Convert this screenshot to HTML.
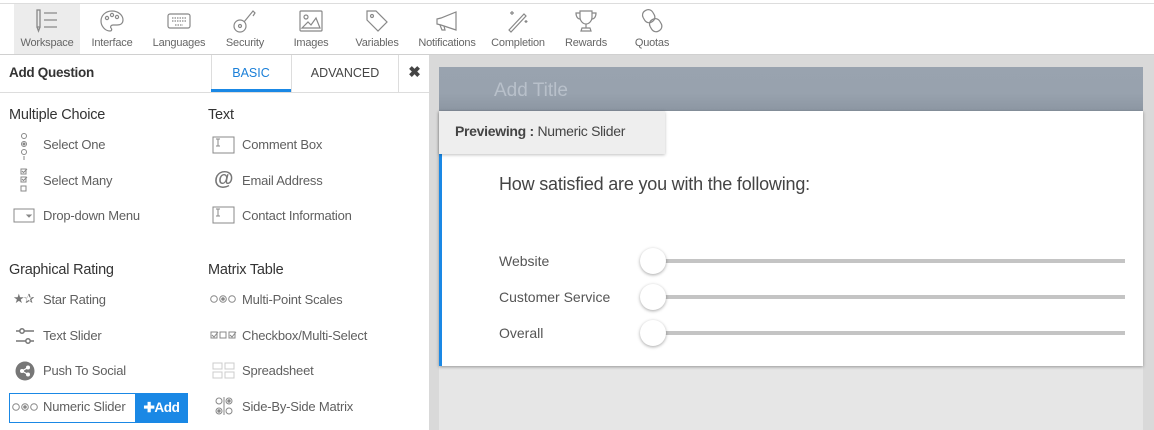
<!DOCTYPE html>
<html><head><meta charset="utf-8"><style>
*{margin:0;padding:0;box-sizing:border-box}
body{width:1154px;height:430px;overflow:hidden;background:#fff;font-family:"Liberation Sans",sans-serif;position:relative}
.abs{position:absolute}
.tb{position:absolute;top:4px;height:50px;text-align:center;font-size:11px;color:#666;letter-spacing:-0.2px}
.tb svg{position:absolute;left:50%;margin-left:-13px;top:4px}
.tb span{position:absolute;left:0;right:0;top:33px;white-space:nowrap}
.h{position:absolute;font-size:14.5px;color:#333;letter-spacing:-0.2px}
.it{position:absolute;font-size:13px;color:#5f5f5f;letter-spacing:-0.2px}
.ic{position:absolute}
.lbl{position:absolute;left:499px;font-size:14px;color:#555}
.track{position:absolute;left:660px;width:465px;height:4px;background:#c4c4c4}
.knob{position:absolute;left:640px;width:26px;height:26px;border-radius:50%;background:#fff;box-shadow:0 1px 3px rgba(0,0,0,.35)}
</style></head><body>
<div class="abs" style="left:0;top:3px;width:1154px;height:1px;background:#ddd"></div>
<div class="abs" style="left:0;top:54px;width:1154px;height:1px;background:#d0d0d0"></div>
<div class="abs" style="left:14px;top:4px;width:66px;height:50px;background:#ececec"></div>

<div class="tb" style="left:14px;width:66px"><svg width="26" height="26" viewBox="0 0 26 26" fill="none" stroke="#888" stroke-width="1.3"><rect x="3" y="2" width="3" height="17"/><path d="M3 19l1.5 4 1.5-4M10 5h13M10 12h13M10 19h13"/></svg><span>Workspace</span></div>
<div class="tb" style="left:85px;width:54px"><svg width="26" height="26" viewBox="0 0 26 26" fill="none" stroke="#888" stroke-width="1.2"><path d="M13 3C6 3 2 8 2 13s4 10 9 10c2 0 2-2 1-3s0-3 2-3h4c4 0 6-2 6-5 0-5-5-9-11-9z"/><circle cx="8" cy="10" r="1.6"/><circle cx="13" cy="7" r="1.6"/><circle cx="18" cy="9" r="1.6"/></svg><span>Interface</span></div>
<div class="tb" style="left:150px;width:58px"><svg width="26" height="26" viewBox="0 0 26 26" fill="none" stroke="#888" stroke-width="1.2"><rect x="2" y="6" width="22" height="14" rx="2"/><path d="M6 10h14M6 13h14M9 17h8" stroke-dasharray="1.5 1"/></svg><span>Languages</span></div>
<div class="tb" style="left:218px;width:54px"><svg width="26" height="26" viewBox="0 0 26 26" fill="none" stroke="#888" stroke-width="1.2"><circle cx="8" cy="18" r="6"/><circle cx="8" cy="18" r="1.5"/><path d="M12 14l9-11 2 2-2 3"/></svg><span>Security</span></div>
<div class="tb" style="left:285px;width:52px"><svg width="26" height="26" viewBox="0 0 26 26" fill="none" stroke="#888" stroke-width="1.2"><rect x="2" y="3" width="22" height="20" rx="1"/><circle cx="8" cy="9" r="2"/><path d="M4 20l6-6 3 3 5-7 4 10z"/></svg><span>Images</span></div>
<div class="tb" style="left:350px;width:54px"><svg width="26" height="26" viewBox="0 0 26 26" fill="none" stroke="#888" stroke-width="1.2"><path d="M3 3h9l11 11-9 9L3 12z"/><circle cx="8" cy="8" r="1.5"/></svg><span>Variables</span></div>
<div class="tb" style="left:414px;width:66px"><svg width="26" height="26" viewBox="0 0 26 26" fill="none" stroke="#888" stroke-width="1.2"><path d="M3 11v5l4 1 15 5V4L7 10z"/><path d="M6 17l2 5h3l-1-4"/></svg><span>Notifications</span></div>
<div class="tb" style="left:488px;width:60px"><svg width="26" height="26" viewBox="0 0 26 26" fill="none" stroke="#888" stroke-width="1.2"><path d="M4 22l15-16 2 2-15 16z"/><path d="M7 3v4M5 5h4M21 12v3M19.5 13.5h3"/></svg><span>Completion</span></div>
<div class="tb" style="left:560px;width:52px"><svg width="26" height="26" viewBox="0 0 26 26" fill="none" stroke="#888" stroke-width="1.2"><path d="M7 3h12v6c0 4-3 7-6 7s-6-3-6-7z"/><path d="M7 5H3c0 4 2 6 4 6M19 5h4c0 4-2 6-4 6M13 16v4M8 23h10l-1-3H9z"/></svg><span>Rewards</span></div>
<div class="tb" style="left:626px;width:52px"><svg width="26" height="26" viewBox="0 0 26 26" fill="none" stroke="#888" stroke-width="1.2"><rect x="4" y="2" width="11" height="13" rx="5" transform="rotate(-30 9 8)"/><rect x="11" y="11" width="11" height="13" rx="5" transform="rotate(-30 16 17)"/></svg><span>Quotas</span></div>

<div class="abs" style="left:9px;top:65px;font-size:13.5px;font-weight:bold;color:#333;letter-spacing:-0.3px">Add Question</div>
<div class="abs" style="left:211px;top:55px;width:1px;height:37px;background:#ddd"></div>
<div class="abs" style="left:291px;top:55px;width:1px;height:37px;background:#ddd"></div>
<div class="abs" style="left:398px;top:55px;width:1px;height:37px;background:#ddd"></div>
<div class="abs" style="left:211px;top:66px;width:80px;text-align:center;font-size:12.5px;color:#1a7fd8">BASIC</div>
<div class="abs" style="left:292px;top:66px;width:106px;text-align:center;font-size:12.5px;color:#444">ADVANCED</div>
<div class="abs" style="left:399px;top:63px;width:31px;text-align:center;font-size:15px;font-weight:bold;color:#444">✖</div>
<div class="abs" style="left:211px;top:89px;width:80px;height:3px;background:#1a88e5"></div>
<div class="abs" style="left:0;top:92px;width:430px;height:1px;background:#ddd"></div>

<div class="h" style="left:9px;top:107px">Multiple Choice</div>
<div class="h" style="left:208px;top:107px">Text</div>
<div class="h" style="left:9px;top:262px">Graphical Rating</div>
<div class="h" style="left:208px;top:262px">Matrix Table</div>

<svg class="ic" style="left:18px;top:133px" width="12" height="28" viewBox="0 0 12 28" fill="none" stroke="#888" stroke-width="1"><circle cx="6" cy="3" r="2.5"/><circle cx="6" cy="11" r="2.5"/><circle cx="6" cy="11" r="1" fill="#888"/><circle cx="6" cy="19" r="2.5"/><path d="M6 23v4"/></svg>
<div class="it" style="left:43px;top:137px">Select One</div>
<svg class="ic" style="left:18px;top:168px" width="12" height="26" viewBox="0 0 12 26" fill="none" stroke="#888" stroke-width="1"><rect x="3" y="1" width="5" height="5"/><rect x="3" y="9" width="5" height="5"/><rect x="3" y="18" width="5" height="5"/><path d="M4 3l1.5 1.5L9 1M4 11l1.5 1.5L9 9"/></svg>
<div class="it" style="left:43px;top:173px">Select Many</div>
<svg class="ic" style="left:13px;top:208px" width="22" height="16" viewBox="0 0 22 16" fill="none" stroke="#888" stroke-width="1"><rect x="1" y="1" width="20" height="13"/><path d="M14 7h4l-2 2z" fill="#888"/></svg>
<div class="it" style="left:43px;top:208px">Drop-down Menu</div>

<svg class="ic" style="left:212px;top:136px" width="23" height="18" viewBox="0 0 23 18" fill="none" stroke="#888" stroke-width="1"><rect x="1" y="1" width="21" height="16"/><path d="M4 3h4M6 3v7M4 10h4"/></svg>
<div class="it" style="left:242px;top:137px">Comment Box</div>
<div class="ic" style="left:214px;top:168px;font-size:20px;color:#777;font-weight:bold">@</div>
<div class="it" style="left:242px;top:173px">Email Address</div>
<svg class="ic" style="left:212px;top:206px" width="23" height="18" viewBox="0 0 23 18" fill="none" stroke="#888" stroke-width="1"><rect x="1" y="1" width="21" height="16"/><path d="M4 3h4M6 3v7M4 10h4"/></svg>
<div class="it" style="left:242px;top:208px">Contact Information</div>

<div class="ic" style="left:13px;top:291px;font-size:13px;color:#777;letter-spacing:-1px">★✰</div>
<div class="it" style="left:43px;top:292px">Star Rating</div>
<svg class="ic" style="left:15px;top:326px" width="20" height="20" viewBox="0 0 20 20" fill="none" stroke="#777" stroke-width="1.5"><path d="M1 5h18M1 15h18"/><circle cx="7" cy="5" r="2.2" fill="#fff"/><circle cx="13" cy="15" r="2.2" fill="#fff"/></svg>
<div class="it" style="left:43px;top:328px">Text Slider</div>
<svg class="ic" style="left:15px;top:361px" width="20" height="20" viewBox="0 0 20 20"><circle cx="10" cy="10" r="9.5" fill="#777"/><circle cx="7" cy="10" r="2" fill="#fff"/><circle cx="13" cy="6.5" r="2" fill="#fff"/><circle cx="13" cy="13.5" r="2" fill="#fff"/><path d="M7 10l6-3.5M7 10l6 3.5" stroke="#fff" stroke-width="1.3"/></svg>
<div class="it" style="left:43px;top:363px">Push To Social</div>

<div class="abs" style="left:9px;top:393px;width:127px;height:30px;border:1px solid #1a88e5"></div>
<svg class="ic" style="left:12px;top:402px" width="28" height="10" viewBox="0 0 28 10" fill="none" stroke="#888" stroke-width="1"><circle cx="4" cy="5" r="3.3"/><circle cx="13" cy="5" r="3.3"/><circle cx="13" cy="5" r="1.3" fill="#888"/><circle cx="22" cy="5" r="3.3"/></svg>
<div class="it" style="left:43px;top:399px">Numeric Slider</div>
<div class="abs" style="left:135px;top:393px;width:53px;height:30px;background:#1a88e5;color:#fff;font-size:13.5px;font-weight:bold;line-height:30px;text-align:center;letter-spacing:-0.4px">✚Add</div>

<svg class="ic" style="left:210px;top:294px" width="28" height="10" viewBox="0 0 28 10" fill="none" stroke="#888" stroke-width="1"><circle cx="4" cy="5" r="3.3"/><circle cx="13" cy="5" r="3.3"/><circle cx="13" cy="5" r="1.3" fill="#888"/><circle cx="22" cy="5" r="3.3"/></svg>
<div class="it" style="left:242px;top:292px">Multi-Point Scales</div>
<svg class="ic" style="left:210px;top:330px" width="28" height="10" viewBox="0 0 28 10" fill="none" stroke="#888" stroke-width="1"><rect x="1" y="2" width="6" height="6"/><rect x="10" y="2" width="6" height="6"/><rect x="19" y="2" width="6" height="6"/><path d="M2 5l2 2 4-5M20 5l2 2 4-5"/></svg>
<div class="it" style="left:242px;top:328px">Checkbox/Multi-Select</div>
<svg class="ic" style="left:212px;top:362px" width="23" height="17" viewBox="0 0 23 17" fill="none" stroke="#ccc" stroke-width="1"><rect x="1" y="1" width="9" height="6"/><rect x="13" y="1" width="9" height="6"/><rect x="1" y="10" width="9" height="6"/><rect x="13" y="10" width="9" height="6"/></svg>
<div class="it" style="left:242px;top:363px">Spreadsheet</div>
<svg class="ic" style="left:215px;top:397px" width="18" height="18" viewBox="0 0 18 18" fill="none" stroke="#888" stroke-width="1"><circle cx="4" cy="4" r="3"/><circle cx="14" cy="4" r="3"/><circle cx="14" cy="4" r="1.2" fill="#888"/><circle cx="4" cy="14" r="3"/><circle cx="4" cy="14" r="1.2" fill="#888"/><circle cx="14" cy="14" r="3"/><path d="M9 0v18"/></svg>
<div class="it" style="left:242px;top:399px">Side-By-Side Matrix</div>

<div class="abs" style="left:429px;top:55px;width:725px;height:375px;background:#d9d9d9"></div>
<div class="abs" style="left:439px;top:67px;width:704px;height:363px;background:#e6e6e6"></div>
<div class="abs" style="left:439px;top:67px;width:704px;height:44px;background:linear-gradient(#99a3af,#98a2ae 60%,#8c96a2)"></div>
<div class="abs" style="left:494px;top:80px;font-size:19px;color:#b8c0ca">Add Title</div>
<div class="abs" style="left:439px;top:111px;width:704px;height:255px;background:#fff;box-shadow:0 1px 3px rgba(0,0,0,.35)"></div>
<div class="abs" style="left:439px;top:154px;width:3px;height:212px;background:#1a88e5"></div>
<div class="abs" style="left:439px;top:111px;width:226px;height:43px;background:#eee;box-shadow:0 1px 3px rgba(0,0,0,.25)"></div>
<div class="abs" style="left:455px;top:123px;font-size:14px;color:#444;letter-spacing:-0.3px"><b>Previewing :</b> Numeric Slider</div>
<div class="abs" style="left:499px;top:174px;font-size:18px;color:#444;letter-spacing:-0.2px">How satisfied are you with the following:</div>

<div class="lbl" style="top:253px">Website</div>
<div class="track" style="top:259px"></div><div class="knob" style="top:248px"></div>
<div class="lbl" style="top:289px">Customer Service</div>
<div class="track" style="top:295px"></div><div class="knob" style="top:284px"></div>
<div class="lbl" style="top:325px">Overall</div>
<div class="track" style="top:331px"></div><div class="knob" style="top:320px"></div>
</body></html>
